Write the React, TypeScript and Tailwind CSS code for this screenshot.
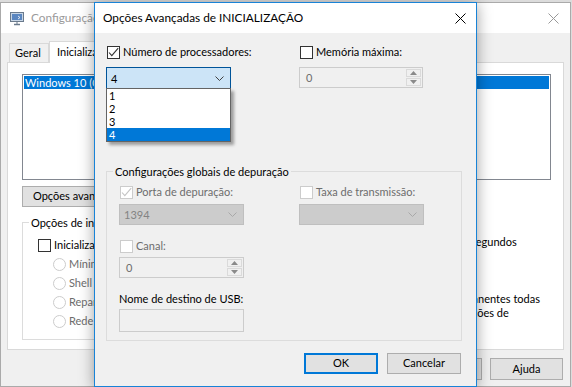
import React from 'react';

const FONT = "font-['Lato','Liberation_Sans',sans-serif]";

function Box({ checked = false, disabled = false }: { checked?: boolean; disabled?: boolean }) {
  return (
    <span
      className={`w-[13px] h-[13px] shrink-0 flex items-center justify-center border bg-white ${
        disabled ? 'border-[#cccccc]' : 'border-[#333333]'
      }`}
    >
      {checked && (
        <svg width="11" height="11" viewBox="0 0 11 11">
          <path d="M1 5.5L3.8 8.6L10.2 1.2" fill="none" stroke={disabled ? '#c4c4c4' : '#333333'} strokeWidth="1.1" />
        </svg>
      )}
    </span>
  );
}

function Radio() {
  return <span className="w-[13px] h-[13px] shrink-0 rounded-full border border-[#cccccc] bg-white" />;
}

function Chevron({ color }: { color: string }) {
  return (
    <svg width="9" height="5" viewBox="0 0 9 5">
      <path d="M0.5 0.5L4.5 4.5L8.5 0.5" fill="none" stroke={color} strokeWidth="1" />
    </svg>
  );
}

function Spin() {
  return (
    <div className="flex flex-col w-[16px] h-full py-[1px] pr-[1px] gap-[1px]">
      <div className="flex-1 border border-[#dadada] bg-[#f0f0f0] flex items-center justify-center">
        <svg width="7" height="4" viewBox="0 0 7 4">
          <path d="M0 4L3.5 0L7 4Z" fill="#8a8a8a" />
        </svg>
      </div>
      <div className="flex-1 border border-[#dadada] bg-[#f0f0f0] flex items-center justify-center">
        <svg width="7" height="4" viewBox="0 0 7 4">
          <path d="M0 0L3.5 4L7 0Z" fill="#8a8a8a" />
        </svg>
      </div>
    </div>
  );
}

function Spinner({ w }: { w: string }) {
  return (
    <div className={`${w} h-[21px] border border-[#cccccc] bg-[#f0f0f0] flex items-center`}>
      <span className="flex-1 pl-[6px] text-[#6d6d6d] leading-none">0</span>
      <Spin />
    </div>
  );
}

function DisabledCombo({ text }: { text: string }) {
  return (
    <div className="w-[125px] h-[21px] border border-[#bfbfbf] bg-[#cccccc] flex items-center pl-[4px] pr-[6px]">
      <span className="flex-1 text-[#838383] leading-none">{text}</span>
      <Chevron color="#a8a8a8" />
    </div>
  );
}

function CheckRow({ label, checked, disabled, gray }: { label: string; checked?: boolean; disabled?: boolean; gray?: boolean }) {
  return (
    <div className="h-[15px] flex items-center gap-[3px] pl-[1px]">
      <Box checked={checked} disabled={disabled} />
      <span className={gray ? 'text-[#6d6d6d]' : 'text-black'}>{label}</span>
    </div>
  );
}

function WinButton({ label, w = 'w-[75px]', h = 'h-[22px]', primary = false }: { label: string; w?: string; h?: string; primary?: boolean }) {
  return (
    <div
      className={`${w} ${h} flex items-center justify-center bg-[#e1e1e1] ${
        primary ? 'border-2 border-[#0078d7]' : 'border border-[#adadad]'
      }`}
    >
      {label}
    </div>
  );
}

function MonitorIcon() {
  return (
    <svg width="14" height="15" viewBox="0 0 14 15">
      <rect x="0.5" y="1.5" width="13" height="9" fill="#c8d6e6" stroke="#6a7a8c" />
      <rect x="2" y="3" width="10" height="6" fill="#5a86c0" />
      <path d="M4 13.5H10" stroke="#6a7a8c" strokeWidth="1.5" />
      <path d="M7 10.5V13" stroke="#6a7a8c" />
      <path d="M8 5L10 6.5L8 8" fill="none" stroke="#ffffff" strokeWidth="0.8" />
    </svg>
  );
}

function BackWindow() {
  return (
    <div className="absolute z-0 left-0 top-[2px] w-[571px] h-[385px] border border-[#aaaaaa] bg-[#f0f0f0] flex flex-col">
      <div className="h-[30px] bg-white flex items-center shrink-0">
        <div className="ml-[9px]">
          <MonitorIcon />
        </div>
        <span className="ml-[7px] text-[11.8px] text-[#9a9a9a]">Configuração do Sistema</span>
        <div className="flex-1" />
        <svg width="11" height="11" viewBox="0 0 11 11" className="mr-[11px]">
          <path d="M0.5 0.5L10.5 10.5M10.5 0.5L0.5 10.5" stroke="#999999" strokeWidth="1" />
        </svg>
      </div>
      <div className="flex-1 flex flex-col px-[6px]">
        <div className="mt-[8px] h-[21px] flex items-end">
          <div className="ml-[2px] h-[19px] w-[40px] border border-b-0 border-[#d9d9d9] bg-[#f0f0f0] flex items-center pl-[5px]">
            Geral
          </div>
          <div className="h-[22px] w-[100px] -mb-px border border-b-0 border-[#d9d9d9] bg-white flex items-center pl-[7px] z-10">
            Inicialização
          </div>
        </div>
        <div className="h-[288px] border border-[#d9d9d9] bg-white flex flex-col pl-[14px] pr-[12px]">
          <div className="mt-[11px] h-[106px] border border-[#828790] p-[1px]">
            <div className="h-[13px] bg-[#0078d7] text-white flex items-center pl-[1px] leading-none">
              Windows 10 (C:\Windows) : Sistema operacional atual; Sistema operacional padrão
            </div>
          </div>
          <div className="mt-[6px] flex gap-[8px]">
            <div className="w-[115px] h-[21px] border border-[#adadad] bg-[#e1e1e1] flex items-center pl-[10px]">
              Opções avançadas...
            </div>
            <div className="w-[110px] h-[21px] border border-[#adadad] bg-[#e1e1e1] flex items-center justify-center">
              Definir como padrão
            </div>
            <div className="w-[75px] h-[21px] border border-[#adadad] bg-[#e1e1e1] flex items-center justify-center">
              Excluir
            </div>
          </div>
          <div className="flex mt-[8px]">
            <fieldset className="w-[300px] h-[125px] border border-[#dcdcdc] pl-[15px]">
              <legend className="-ml-[9px] px-[2px] leading-[15px] text-black">Opções de inicialização</legend>
              <div className="flex items-center gap-[3px] h-[15px] mt-[8px]">
                <Box />
                <span>Inicialização segura</span>
              </div>
              <div className="pl-[15px] flex flex-col gap-[4px] mt-[4px] text-[#6d6d6d]">
                <div className="flex items-center gap-[3px] h-[15px]"><Radio /><span>Mínima</span></div>
                <div className="flex items-center gap-[3px] h-[15px]"><Radio /><span>Shell alternativo</span></div>
                <div className="flex items-center gap-[3px] h-[15px]"><Radio /><span>Reparo do Active Directory</span></div>
                <div className="flex items-center gap-[3px] h-[15px]"><Radio /><span>Rede</span></div>
              </div>
            </fieldset>
            <div className="ml-[94px] flex flex-col">
              <span className="h-[15px] leading-[15px] -ml-[14px]">Tempo limite:</span>
              <div className="flex items-center gap-[5px] mt-[2px]">
                <div className="w-[50px] h-[21px] border border-[#7a7a7a] bg-white pl-[3px] flex items-center">30</div>
                <span>segundos</span>
              </div>
              <div className="mt-[39px] flex gap-[3px] -ml-[18px]">
                <Box />
                <span className="leading-[14px]">
                  Tornar permanentes todas
                  <br />
                  as configurações de
                  <br />
                  inicialização
                </span>
              </div>
            </div>
          </div>
        </div>
        <div className="mt-[8px] flex justify-end gap-[8px] pr-[1px]">
          <WinButton label="OK" />
          <WinButton label="Cancelar" />
          <WinButton label="Aplicar" />
          <WinButton label="Ajuda" w="w-[73px]" />
        </div>
      </div>
    </div>
  );
}

function FrontDialog() {
  return (
    <div className="absolute z-10 left-[94px] top-[2px] w-[383px] h-[385px] border border-[#1883d7] bg-[#f0f0f0] flex flex-col shadow-[0_2px_14px_rgba(0,0,0,0.38)]">
      <div className="h-[30px] bg-white flex items-center shrink-0">
        <span className="ml-[8px] text-black text-[11.8px]">Opções Avançadas de INICIALIZAÇÃO</span>
        <div className="flex-1" />
        <svg width="11" height="11" viewBox="0 0 11 11" className="mr-[10px]">
          <path d="M0.5 0.5L10.5 10.5M10.5 0.5L0.5 10.5" stroke="#000000" strokeWidth="1" />
        </svg>
      </div>
      <div className="flex-1 flex flex-col pl-[11px]">
        <div className="mt-[12px] flex gap-[68px]">
          <div className="relative w-[125px] flex flex-col">
            <CheckRow label="Número de processadores:" checked />
            <div className="mt-[7px] h-[22px] border border-[#005499] bg-[#cce4f7] flex items-center pl-[4px] pr-[6px]">
              <span className="flex-1 leading-none">4</span>
              <Chevron color="#404040" />
            </div>
            <div className="absolute left-0 top-[43px] w-[125px] border border-[#646464] bg-white flex flex-col shadow-[3px_3px_3px_rgba(0,0,0,0.35)] z-20">
              <div className="h-[13px] flex items-center pl-[2px] leading-none">1</div>
              <div className="h-[13px] flex items-center pl-[2px] leading-none">2</div>
              <div className="h-[13px] flex items-center pl-[2px] leading-none">3</div>
              <div className="h-[13px] flex items-center pl-[2px] leading-none bg-[#0078d7] text-white">4</div>
            </div>
          </div>
          <div className="w-[124px] flex flex-col">
            <CheckRow label="Memória máxima:" />
            <div className="mt-[7px]">
              <Spinner w="w-[124px]" />
            </div>
          </div>
        </div>
        <fieldset className="mt-[75px] w-[356px] h-[177px] border border-[#dcdcdc] pl-[12px]">
          <legend className="-ml-[6px] px-[2px] leading-[15px] text-black">Configurações globais de depuração</legend>
          <div className="flex gap-[55px] mt-[6px]">
            <div className="flex flex-col w-[125px]">
              <CheckRow label="Porta de depuração:" checked disabled gray />
              <div className="mt-[4px]">
                <DisabledCombo text="1394" />
              </div>
              <div className="mt-[14px]">
                <CheckRow label="Canal:" disabled gray />
              </div>
              <div className="mt-[3px]">
                <Spinner w="w-[125px]" />
              </div>
              <span className="mt-[13px] h-[15px] leading-[15px]">Nome de destino de USB:</span>
              <div className="mt-[3px] w-[125px] h-[23px] border border-[#cccccc] bg-[#f0f0f0]" />
            </div>
            <div className="flex flex-col w-[125px]">
              <CheckRow label="Taxa de transmissão:" disabled gray />
              <div className="mt-[4px]">
                <DisabledCombo text="" />
              </div>
            </div>
          </div>
        </fieldset>
        <div className="mt-[12px] flex justify-end gap-[9px] pr-[15px]">
          <WinButton label="OK" w="w-[74px]" h="h-[21px]" primary />
          <WinButton label="Cancelar" w="w-[74px]" h="h-[21px]" />
        </div>
      </div>
    </div>
  );
}

export default function App() {
  return (
    <div className={`relative w-[572px] h-[387px] overflow-hidden whitespace-nowrap bg-[#dcdcdc] text-[11px] text-black ${FONT}`}>
      <BackWindow />
      <FrontDialog />
    </div>
  );
}
